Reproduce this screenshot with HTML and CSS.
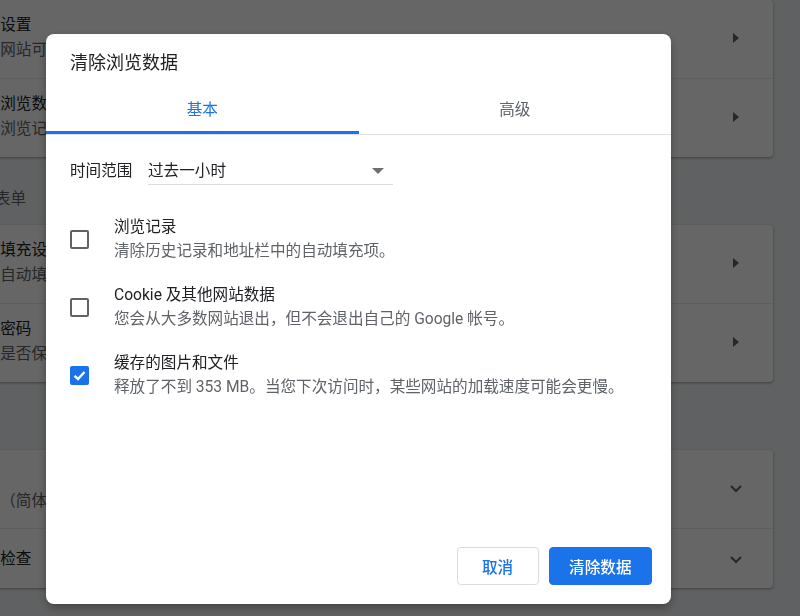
FILE: index.html
```html
<!DOCTYPE html>
<html lang="zh-CN">
<head>
<meta charset="utf-8">
<title>清除浏览数据</title>
<link rel="stylesheet" href="styles.css">
</head>
<body>
<main class="page">
  <section class="card">
    <div class="row">
      <div class="row-text">
        <div class="primary">网站设置</div>
        <div class="secondary">控制网站可以使用和显示的信息</div>
      </div>
      <span class="arrow"></span>
    </div>
    <div class="row">
      <div class="row-text">
        <div class="primary">清除浏览数据</div>
        <div class="secondary">清除浏览记录、Cookie、缓存及其他数据</div>
      </div>
      <span class="arrow"></span>
    </div>
  </section>
  <h2 class="heading">密码和表单</h2>
  <section class="card">
    <div class="row">
      <div class="row-text">
        <div class="primary">自动填充设置</div>
        <div class="secondary">管理自动填充信息</div>
      </div>
      <span class="arrow"></span>
    </div>
    <div class="row">
      <div class="row-text">
        <div class="primary">管理密码</div>
        <div class="secondary">提供是否保存密码的选项</div>
      </div>
      <span class="arrow"></span>
    </div>
  </section>
  <h2 class="heading">语言</h2>
  <section class="card card-lang">
    <div class="row">
      <div class="row-text">
        <div class="primary">语言</div>
        <div class="secondary">中文（简体）</div>
      </div>
      <svg class="chevron" width="12" height="8" viewBox="0 0 12 8"><polyline points="1,1 6,6 11,1" fill="none" stroke="#5f6368" stroke-width="2"/></svg>
    </div>
    <div class="row row-single">
      <div class="row-text">
        <div class="primary">拼写检查</div>
      </div>
      <svg class="chevron" width="12" height="8" viewBox="0 0 12 8"><polyline points="1,1 6,6 11,1" fill="none" stroke="#5f6368" stroke-width="2"/></svg>
    </div>
  </section>
</main>

<div class="scrim"></div>

<div class="dialog" role="dialog">
  <div class="dialog-title">清除浏览数据</div>
  <div class="tabs">
    <div class="tab tab-active">基本</div>
    <div class="tab">高级</div>
  </div>
  <div class="dialog-body">
    <div class="range-row">
      <span class="range-label">时间范围</span>
      <div class="select">
        <span class="select-value">过去一小时</span>
        <span class="select-arrow"></span>
      </div>
    </div>
    <div class="option">
      <span class="checkbox"></span>
      <div class="option-text">
        <div class="option-title">浏览记录</div>
        <div class="option-sub">清除历史记录和地址栏中的自动填充项。</div>
      </div>
    </div>
    <div class="option">
      <span class="checkbox"></span>
      <div class="option-text">
        <div class="option-title">Cookie 及其他网站数据</div>
        <div class="option-sub">您会从大多数网站退出，但不会退出自己的 Google 帐号。</div>
      </div>
    </div>
    <div class="option">
      <span class="checkbox checkbox-checked">
        <svg width="15" height="15" viewBox="0 0 15 15"><polyline points="2.5,7.8 6,11 12.5,4" fill="none" stroke="#fff" stroke-width="2.4"/></svg>
      </span>
      <div class="option-text">
        <div class="option-title">缓存的图片和文件</div>
        <div class="option-sub">释放了不到 353 MB。当您下次访问时，某些网站的加载速度可能会更慢。</div>
      </div>
    </div>
  </div>
  <div class="dialog-footer">
    <button class="btn btn-cancel">取消</button>
    <button class="btn btn-primary">清除数据</button>
  </div>
</div>
</body>
</html>
```

FILE: styles.css
```css
html, body {
  margin: 0;
  padding: 0;
}

body {
  background: #f1f3f4;
  font-family: Roboto, "Noto Sans CJK SC", sans-serif;
  font-size: 15.6px;
  line-height: 24px;
  color: #202124;
  overflow: hidden;
  width: 800px;
  height: 616px;
}

.page {
  margin-left: -52px;
  width: 825px;
  display: flex;
  flex-direction: column;
}

.card {
  background: #fff;
  border-radius: 4px;
  box-shadow: 0 1px 2px rgba(60, 64, 67, 0.3), 0 1px 3px 1px rgba(60, 64, 67, 0.15);
}

.row {
  display: flex;
  align-items: center;
  box-sizing: border-box;
  min-height: 78px;
  padding: 0 27px 2px 21px;
}

.row + .row {
  border-top: 1px solid #e8eaed;
  min-height: 79px;
}

.card-lang .row {
  padding-bottom: 0;
}

.card-lang .row + .row-single {
  min-height: 60px;
  padding-top: 2px;
}

.row-text {
  flex: 1;
  white-space: nowrap;
}

.primary {
  color: #202124;
  line-height: 25px;
}

.secondary {
  color: #5f6368;
  line-height: 25px;
}

.arrow {
  width: 0;
  height: 0;
  border-top: 5px solid transparent;
  border-bottom: 5px solid transparent;
  border-left: 6px solid #5f6368;
  margin-right: 7px;
  margin-left: 7px;
}

.chevron {
  margin-right: 4px;
  display: block;
}

.heading {
  margin: 0;
  padding: 30px 0 14px;
  font-size: 15.6px;
  font-weight: 400;
  line-height: 24px;
  color: #5f6368;
  white-space: nowrap;
}

.scrim {
  position: fixed;
  inset: 0;
  background: rgba(0, 0, 0, 0.6);
}

.dialog {
  position: fixed;
  left: 46px;
  top: 34px;
  width: 625px;
  height: 570px;
  box-sizing: border-box;
  display: flex;
  flex-direction: column;
  background: #fff;
  border-radius: 8px;
  box-shadow: 0 4px 10px rgba(0, 0, 0, 0.3);
}

.dialog-title {
  padding: 17px 24px 0;
  font-size: 18px;
  line-height: 24px;
  color: #202124;
}

.tabs {
  display: flex;
  margin-top: 11px;
  border-bottom: 1px solid #e0e0e0;
}

.tab {
  flex: 1;
  height: 48px;
  box-sizing: border-box;
  display: flex;
  align-items: center;
  justify-content: center;
  color: #5f6368;
}

.tab-active {
  color: #1a73e8;
  border-bottom: 3px solid #1a73e8;
  padding-top: 2px;
}

.dialog-body {
  padding: 0 24px;
}

.range-row {
  display: flex;
  align-items: flex-end;
  margin-top: 19px;
}

.range-label {
  color: #202124;
  padding-bottom: 4px;
  line-height: 20px;
  width: 78px;
}

.select {
  width: 245px;
  box-sizing: border-box;
  display: flex;
  align-items: center;
  justify-content: space-between;
  padding: 7px 8px 3px 0;
  line-height: 20px;
  border-bottom: 1px solid #dadce0;
}

.select-value {
  color: #202124;
}

.select-arrow {
  width: 0;
  height: 0;
  border-left: 6.5px solid transparent;
  border-right: 6.5px solid transparent;
  border-top: 6px solid #6e6e6e;
  margin-right: 1px;
}

.option {
  display: flex;
  align-items: center;
  margin-top: 20px;
}

.range-row + .option {
  margin-top: 30px;
}

.checkbox {
  width: 19px;
  height: 19px;
  box-sizing: border-box;
  border: 2px solid #5f6368;
  border-radius: 2px;
  margin-left: 0;
  margin-right: 25px;
  flex-shrink: 0;
  display: flex;
  align-items: center;
  justify-content: center;
}

.checkbox-checked {
  background: #1a73e8;
  border-color: #1a73e8;
}

.checkbox-checked svg {
  display: block;
}

.option-title {
  color: #202124;
  line-height: 24px;
}

.option-sub {
  color: #5f6368;
  line-height: 24px;
}

.dialog-footer {
  margin-top: auto;
  padding: 0 19px 19px;
  display: flex;
  justify-content: flex-end;
  gap: 10px;
}

.btn {
  height: 38px;
  min-width: 82px;
  box-sizing: border-box;
  padding: 0 19.5px;
  border-radius: 4px;
  font-family: Roboto, "Noto Sans CJK SC", sans-serif;
  font-size: 15.6px;
  font-weight: 500;
  cursor: pointer;
}

.btn-cancel {
  background: #fff;
  color: #1a73e8;
  border: 1px solid #dadce0;
}

.btn-primary {
  background: #1a73e8;
  color: #fff;
  border: 1px solid #1a73e8;
}
```
